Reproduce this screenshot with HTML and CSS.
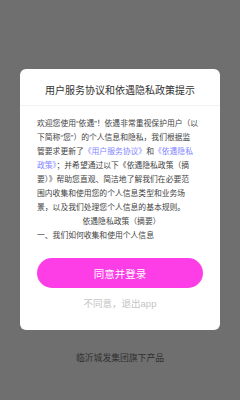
FILE: index.html
```html
<!DOCTYPE html>
<html lang="zh-CN">
<head>
    <meta charset="UTF-8">
    <meta name="viewport" content="width=device-width, initial-scale=1.0">
    <title>用户服务协议和依遇隐私政策提示</title>
    <link rel="stylesheet" href="styles.css">
</head>
<body>
    <div class="page">
        <div class="dialog">
            <div class="dialog-title">用户服务协议和依遇隐私政策提示</div>
            <div class="dialog-body">
                <p class="intro">欢迎您使用“依遇”！依遇非常重视保护用户（以<br>下简称“您”）的个人信息和隐私，我们根据监<br>管要求更新了<a href="#">《用户服务协议》</a>和<a href="#">《依遇隐私<br>政策》</a>；并希望通过以下《依遇隐私政策（摘<br>要）》帮助您直观、简洁地了解我们在必要范<br>围内收集和使用您的个人信息类型和业务场<br>景，以及我们处理您个人信息的基本规则。</p>
                <p class="center">依遇隐私政策（摘要）</p>
                <p>一、我们如何收集和使用个人信息</p>
            </div>
            <button class="btn-agree">同意并登录</button>
            <div class="btn-refuse">不同意，退出app</div>
        </div>
        <div class="footer">临沂城发集团旗下产品</div>
    </div>
</body>
</html>
```

FILE: styles.css
```css
html, body {
    margin: 0;
    padding: 0;
}
body {
    font-family: "Liberation Sans", "Noto Sans CJK SC", sans-serif;
    background: #6f6f6f;
    width: 240px;
    height: 400px;
    overflow: hidden;
}
.page {
    padding-top: 69px;
}
.dialog {
    margin: 0 20px;
    background: #fff;
    border-radius: 6px;
    padding-bottom: 19px;
}
.dialog-title {
    font-size: 10px;
    line-height: 14px;
    color: #333;
    text-align: center;
    padding: 15px 0 7px;
    border-bottom: 1px solid #f2f2f2;
}
.dialog-body {
    padding: 11px 14px 0 17px;
    font-size: 7.8px;
    line-height: 14px;
    color: #444;
    white-space: nowrap;
}
.dialog-body p {
    margin: 0;
}
.dialog-body a {
    color: #8585ff;
    text-decoration: none;
}
.center {
    text-align: center;
}
.btn-agree {
    display: block;
    width: 166px;
    height: 30px;
    margin: 15px auto 0;
    border: none;
    border-radius: 15px;
    background: #fd3de6;
    color: #fff;
    font-family: inherit;
    font-size: 10.5px;
}
.btn-refuse {
    margin-top: 9px;
    text-align: center;
    font-size: 9.5px;
    line-height: 14px;
    color: #c4c4c4;
}
.footer {
    margin-top: 22px;
    text-align: center;
    font-size: 8.8px;
    line-height: 12px;
    color: #2f2f2f;
}
```
